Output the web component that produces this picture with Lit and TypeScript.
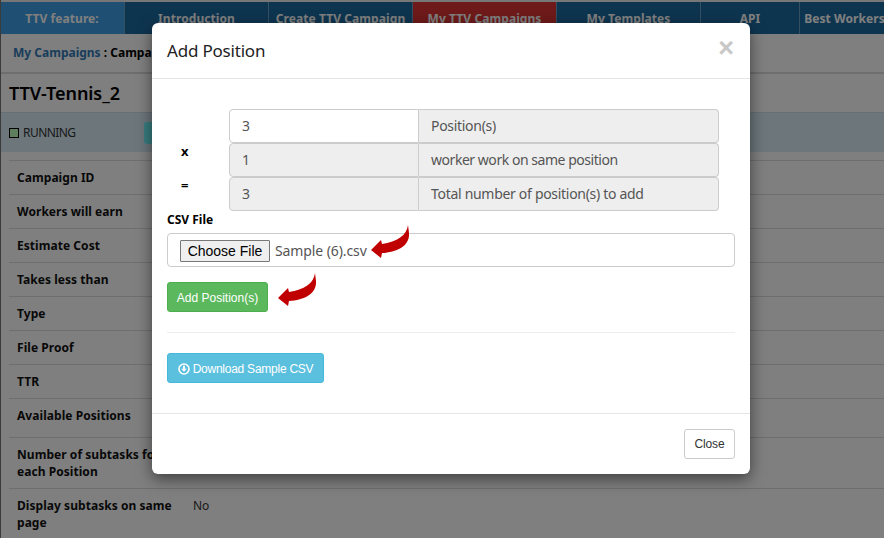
import { LitElement, html, css } from 'lit';
import { customElement } from 'lit/decorators.js';

const NAV = [
  ['TTV feature:', 125, 'lead'],
  ['Introduction', 144, ''],
  ['Create TTV Campaign', 144, ''],
  ['My TTV Campaigns', 144, 'active'],
  ['My Templates', 144, ''],
  ['API', 99, ''],
  ['Best Workers', 90, ''],
];

const ROWS = [
  ['Campaign ID', ''],
  ['Workers will earn', ''],
  ['Estimate Cost', ''],
  ['Takes less than', ''],
  ['Type', ''],
  ['File Proof', ''],
  ['TTR', ''],
  ['Available Positions', ''],
  ['Number of subtasks for each Position', ''],
  ['Display subtasks on same page', 'No'],
];

@customElement('app-root')
export class AppRoot extends LitElement {
  static styles = css`
    :host {
      display: block;
      position: relative;
      width: 884px;
      height: 538px;
      overflow: hidden;
      background: #fff;
      font-family: "Noto Sans", "Open Sans", sans-serif;
      font-size: 13px;
      color: #333;
    }
    .page {
      height: 538px;
      box-sizing: border-box;
      border-left: 1px solid #777;
      overflow: hidden;
    }
    .nav {
      display: flex;
      height: 32px;
      margin-left: -1px;
      width: 900px;
      border-top: 2px solid #eee;
    }
    .nav div {
      box-sizing: border-box;
      text-align: center;
      line-height: 33px;
      font-weight: 700;
      font-size: 12px;
      letter-spacing: .08px;
      color: #fff;
      background: #1c6aa0;
      border-right: 1px solid #6a9cc0;
      white-space: nowrap;
    }
    .nav .lead { background: #3fa0e6; }
    .nav .active { background: #dc3434; }
    .crumbs {
      height: 38px;
      padding-left: 12px;
      line-height: 38px;
      font-size: 12px;
      font-weight: 700;
      color: #000;
      border-bottom: 2px solid #ddd;
    }
    .crumbs a { color: #337ab7; }
    h2 {
      margin: 0;
      height: 38px;
      padding-left: 8px;
      line-height: 38px;
      font-size: 18px;
      font-weight: 600;
      letter-spacing: -.05px;
      color: #000;
    }
    .status {
      display: flex;
      align-items: center;
      gap: 4px;
      height: 40px;
      padding-left: 8px;
      background: #d9edf7;
      font-size: 12px;
      letter-spacing: -.55px;
      border-top: 1px solid #cde;
      box-sizing: border-box;
    }
    .status i {
      width: 8px;
      height: 8px;
      border: 1px solid #000;
      background: #bcfcbc;
    }
    .status button {
      width: 40px;
      height: 22px;
      margin-left: 64px;
      border: 0;
      border-radius: 3px;
      background: #70f8ff;
    }
    .table { margin: 8px 0 0 8px; border-top: 1px solid #ddd; }
    .row {
      display: flex;
      border-bottom: 1px solid #ddd;
      padding: 8px;
      min-height: 17px;
      font-size: 12px;
      line-height: 17px;
    }
    .row b {
      box-sizing: border-box;
      width: 176px;
      padding-right: 14px;
      color: #111;
      letter-spacing: .05px;
    }
    .row:nth-child(8) { padding-bottom: 13px; }

    .backdrop {
      position: absolute;
      inset: 0;
      background: rgba(0, 0, 0, .5);
    }
    .modal {
      position: absolute;
      left: 152px;
      top: 23px;
      width: 598px;
      height: 451px;
      background: #fff;
      border-radius: 6px;
      box-shadow: 0 5px 15px rgba(0, 0, 0, .5);
      display: flex;
      flex-direction: column;
    }
    .head {
      display: flex;
      justify-content: space-between;
      height: 55px;
      padding: 0 15px;
      border-bottom: 1px solid #e5e5e5;
      align-items: center;
    }
    .head span { font-size: 17px; letter-spacing: -.2px; color: #222; }
    .x {
      font-size: 27px;
      line-height: 27px;
      font-weight: 700;
      color: #c8c8c8;
      margin-top: -5px;
      margin-right: 1px;
      font-family: "Liberation Sans", sans-serif;
    }
    .body { flex: 1; padding: 30px 15px 0; position: relative; }
    .lines {
      display: grid;
      grid-template-columns: 62px 1fr;
      margin-right: 16px;
    }
    .op {
      font-size: 13px;
      font-weight: 700;
      color: #000;
      padding-left: 14px;
      line-height: 16px;
    }
    .group {
      display: flex;
      height: 34px;
      font-size: 14px;
      letter-spacing: -.3px;
      line-height: 32px;
      color: #555;
    }
    .group > div {
      box-sizing: border-box;
      border: 1px solid #ccc;
      background: #eee;
    }
    .val {
      width: 190px;
      padding-left: 12px;
      border-radius: 4px 0 0 4px;
    }
    .val.on { background: #fff; }
    .lab {
      flex: 1;
      padding-left: 12px;
      border-left: 0 !important;
      border-radius: 0 4px 4px 0;
    }
    .lab.tight { letter-spacing: -.46px; }
    .csv {
      display: block;
      font-size: 12px;
      font-weight: 700;
      color: #000;
      margin-top: -1px;
      line-height: 20px;
    }
    .file {
      display: flex;
      align-items: center;
      box-sizing: border-box;
      height: 34px;
      margin-top: 3px;
      padding-left: 12px;
      border: 1px solid #ccc;
      border-radius: 4px;
      font-size: 14px;
      letter-spacing: -.1px;
      color: #555;
    }
    .choose {
      box-sizing: border-box;
      height: 22px;
      width: 90px;
      padding: 0;
      margin: 2px 5px 0 0;
      border: 1px solid #777;
      border-radius: 1px;
      background: #efefef;
      color: #000;
      font: 14px "Liberation Sans", sans-serif;
    }
    .btn {
      box-sizing: border-box;
      display: inline-flex;
      align-items: center;
      justify-content: center;
      height: 30px;
      border-radius: 3px;
      color: #fff;
      font-size: 12px;
      border: 1px solid transparent;
      padding: 0;
    }
    .green {
      width: 101px;
      margin-top: 15px;
      padding-top: 2px;
      background: #5cb85c;
      border-color: #4cae4c;
    }
    .sep { height: 1px; background: #eee; margin: 20px 0; }
    .blue {
      width: 157px;
      gap: 3px;
      padding-top: 2px;
      letter-spacing: -.25px;
      background: #5bc0de;
      border-color: #46b8da;
    }
    .foot {
      height: 60px;
      padding-right: 15px;
      border-top: 1px solid #e5e5e5;
      display: flex;
      justify-content: flex-end;
      align-items: center;
    }
    .close {
      width: 51px;
      background: #fff;
      border-color: #ccc;
      color: #333;
      letter-spacing: -.1px;
    }
    .arrow { position: absolute; }
    .a1 { left: 219px; top: 146px; }
    .a2 { left: 126px; top: 194px; }
  `;

  arrow(cls: string) {
    return html`<svg class="arrow ${cls}" width="40" height="36" viewBox="0 0 40 36">
      <path fill="#c00000" d="M37 0C36 10 26 17 11 19L10 15L0 25L10 33L11 28C26 27 39 21 38 8Z" />
    </svg>`;
  }

  render() {
    return html`
      <div class="page">
        <div class="nav">
          ${NAV.map(([t, w, c]) => html`<div class="${c}" style="width:${w}px">${t}</div>`)}
        </div>
        <div class="crumbs"><a>My Campaigns</a> : Campaign</div>
        <h2>TTV-Tennis_2</h2>
        <div class="status"><i></i>RUNNING<button></button></div>
        <div class="table">
          ${ROWS.map(([k, v]) => html`<div class="row"><b>${k}</b><span>${v}</span></div>`)}
        </div>
      </div>
      <div class="backdrop"></div>
      <div class="modal">
        <div class="head"><span>Add Position</span><div class="x">×</div></div>
        <div class="body">
          <div class="lines">
            <div class="op"></div>
            <div class="group"><div class="val on">3</div><div class="lab">Position(s)</div></div>
            <div class="op">x</div>
            <div class="group"><div class="val">1</div><div class="lab tight">worker work on same position</div></div>
            <div class="op">=</div>
            <div class="group"><div class="val">3</div><div class="lab">Total number of position(s) to add</div></div>
          </div>
          <span class="csv">CSV File</span>
          <div class="file"><button class="choose">Choose File</button>Sample (6).csv</div>
          <button class="btn green">Add Position(s)</button>
          <div class="sep"></div>
          <button class="btn blue">
            <svg width="12" height="12" viewBox="0 0 12 12">
              <circle cx="6" cy="6" r="5" fill="none" stroke="#fff" stroke-width="1.6" />
              <path fill="#fff" d="M5 2.8h2v3h1.8L6 8.8 3.2 5.8H5z" />
            </svg>
            Download Sample CSV
          </button>
          ${this.arrow('a1')} ${this.arrow('a2')}
        </div>
        <div class="foot"><button class="btn close">Close</button></div>
      </div>
    `;
  }
}
